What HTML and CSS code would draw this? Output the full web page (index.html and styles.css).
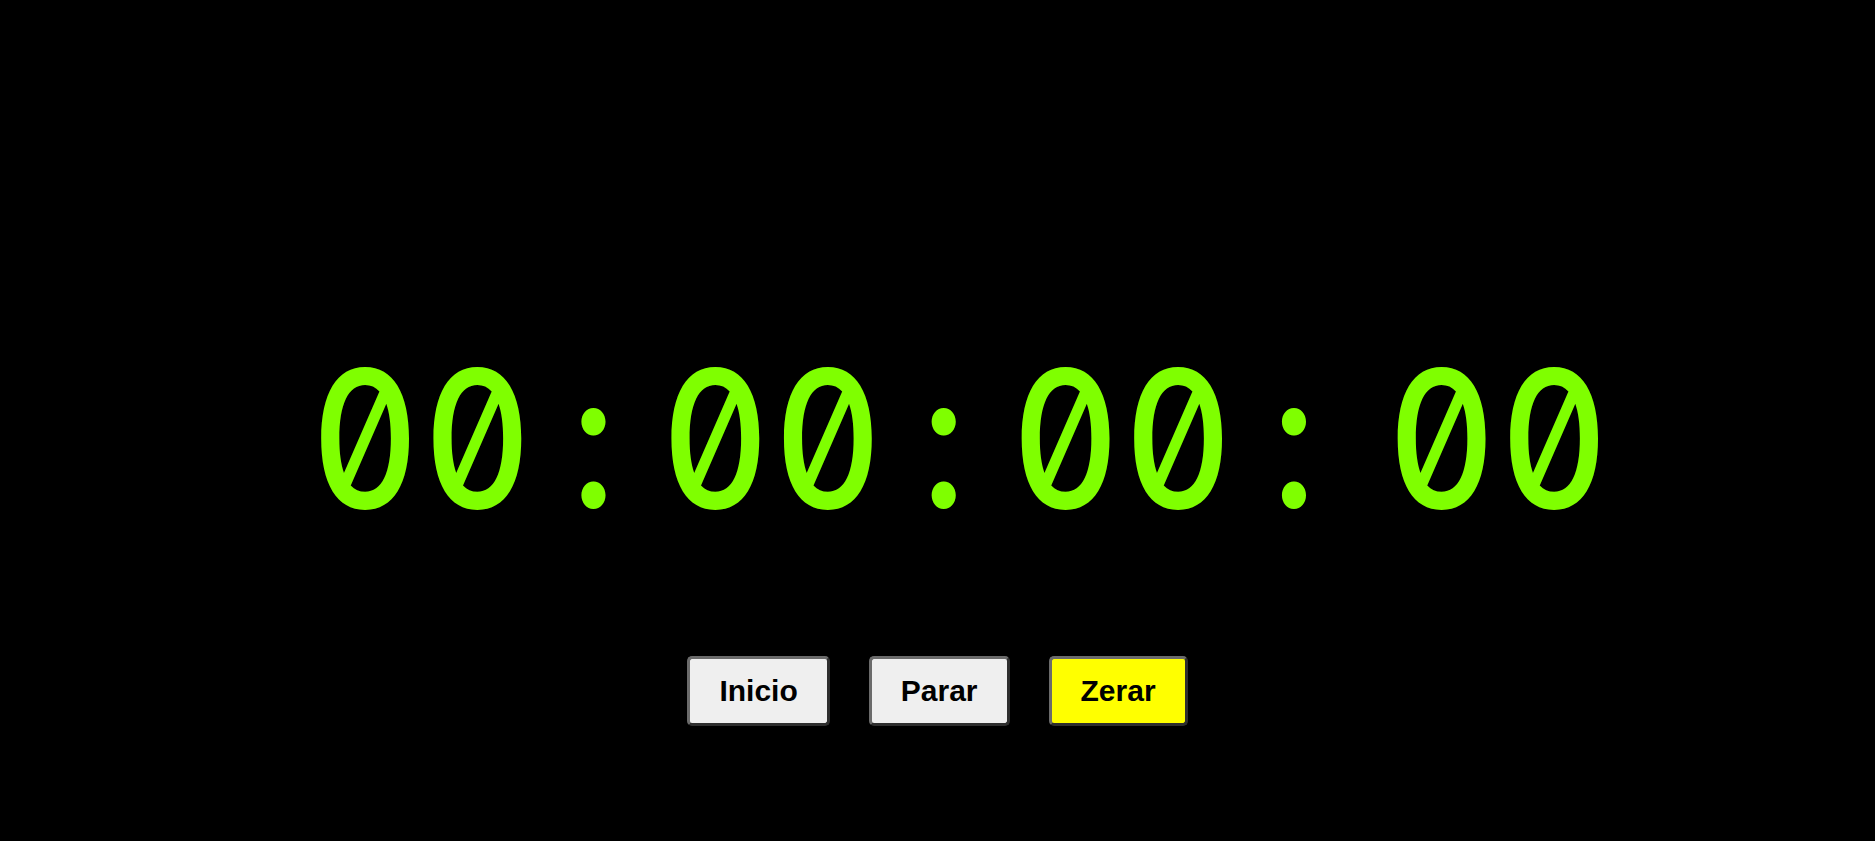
FILE: index.html
```html
<!DOCTYPE html>
<html lang="pt">
<head>
<meta charset="utf-8">
<title>Cronômetro</title>
<link rel="stylesheet" href="styles.css">
</head>
<body>
<main class="app">
  <div class="timer">
    <span class="pair">00</span><span class="sep">:</span><span class="pair">00</span><span class="sep">:</span><span class="pair">00</span><span class="sep sep-last">:</span><span class="pair">00</span>
  </div>
  <div class="controls">
    <button class="btn">Inicio</button>
    <button class="btn">Parar</button>
    <button class="btn btn-reset">Zerar</button>
  </div>
</main>
</body>
</html>
```
FILE: styles.css
```css
html, body {
  margin: 0;
  padding: 0;
  background: #000;
}

.app {
  height: 841px;
  display: flex;
  flex-direction: column;
  align-items: center;
  padding-top: 339px;
  box-sizing: border-box;
}

.timer {
  display: flex;
  font-family: Inter, "DejaVu Sans", sans-serif;
  font-weight: 500;
  font-feature-settings: "zero" 1, "tnum" 1;
  font-size: 191px;
  line-height: 200px;
  color: #7fff00;
  margin-left: 48px;
  transform: scaleX(0.875);
  transform-origin: center;
}

.pair {
  letter-spacing: 4.7px;
}

.sep {
  box-sizing: border-box;
  width: 143.4px;
  padding-right: 12px;
  text-align: center;
}

.sep-last {
  margin-right: 29.4px;
}

.controls {
  display: flex;
  gap: 39px;
  margin-top: 117px;
}

.btn {
  font-family: "Liberation Sans", Arial, sans-serif;
  font-weight: bold;
  font-size: 30px;
  line-height: 34px;
  color: #000;
  background: #efefef;
  padding: 15px 29px;
  border: 3px solid;
  border-color: #6b6b6b #2e2e2e #2e2e2e #6b6b6b;
  border-radius: 5px;
}

.btn-reset {
  background: #ffff00;
}
```
